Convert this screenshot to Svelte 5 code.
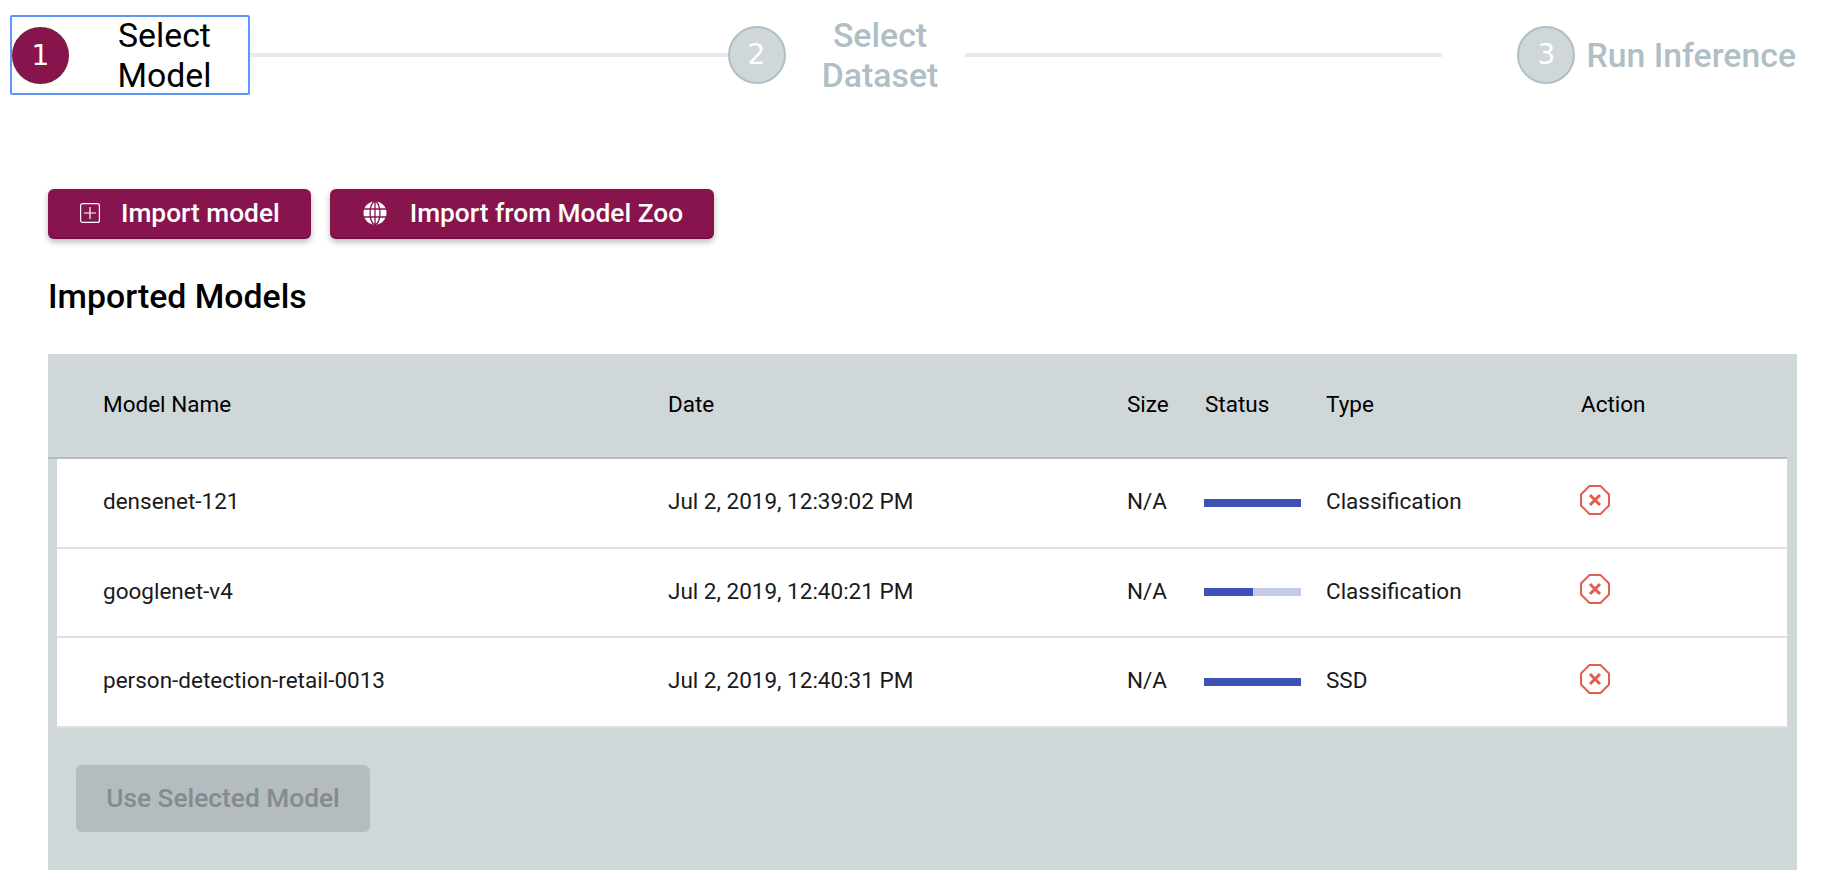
<script>
  const steps = [
    { num: 1, label: 'Select Model', active: true },
    { num: 2, label: 'Select Dataset', active: false },
    { num: 3, label: 'Run Inference', active: false, last: true }
  ];

  const models = [
    { name: 'densenet-121', date: 'Jul 2, 2019, 12:39:02 PM', size: 'N/A', progress: 100, type: 'Classification' },
    { name: 'googlenet-v4', date: 'Jul 2, 2019, 12:40:21 PM', size: 'N/A', progress: 50, type: 'Classification' },
    { name: 'person-detection-retail-0013', date: 'Jul 2, 2019, 12:40:31 PM', size: 'N/A', progress: 100, type: 'SSD' }
  ];
</script>

<div class="page">
  <div class="stepper">
    {#each steps as step, i}
      <div class="step" class:active={step.active} class:last={step.last}>
        <span class="circle">{step.num}</span>
        <span class="label">{step.label}</span>
      </div>
      {#if i < steps.length - 1}
        <div class="line"></div>
      {/if}
    {/each}
  </div>

  <div class="content">
    <div class="actions">
      <button class="btn">
        <svg width="20" height="20" viewBox="0 0 20 20" fill="none" stroke="#fff" stroke-width="1.2">
          <rect x="0.6" y="0.6" width="18.8" height="18.8" rx="2" />
          <path d="M10 4v12M4 10h12" />
        </svg>
        Import model
      </button>
      <button class="btn globe">
        <svg width="24" height="24" viewBox="0 0 24 24" fill="none">
          <circle cx="12" cy="12" r="11.5" fill="#fff" />
          <g stroke="#88144e" stroke-width="1.3">
            <ellipse cx="12" cy="12" rx="5" ry="11.5" />
            <path d="M12 0v24M1 8h22M1 16h22" />
          </g>
        </svg>
        Import from Model Zoo
      </button>
    </div>

    <h2>Imported Models</h2>

    <div class="panel">
      <div class="row head">
        <div>Model Name</div>
        <div>Date</div>
        <div>Size</div>
        <div>Status</div>
        <div>Type</div>
        <div>Action</div>
      </div>
      <div class="rows">
        {#each models as model}
          <div class="row item">
            <div>{model.name}</div>
            <div>{model.date}</div>
            <div>{model.size}</div>
            <div class="bar"><div class="fill" style="width: {model.progress}%"></div></div>
            <div>{model.type}</div>
            <div class="act">
              <svg width="30" height="30" viewBox="0 0 30 30" fill="none" stroke="#e35d4f">
                <path stroke-width="2" d="M9.5 1h11L29 9.5v11L20.5 29h-11L1 20.5v-11z" />
                <path stroke-width="3" d="M10 10l10 10M20 10l-10 10" />
              </svg>
            </div>
          </div>
        {/each}
      </div>
      <button class="use" disabled>Use Selected Model</button>
    </div>
  </div>
</div>

<style>
  :global(body) {
    background: #fff;
    font-family: Roboto, sans-serif;
  }

  .page {
    width: 1831px;
    height: 882px;
    overflow: hidden;
  }

  .stepper {
    display: flex;
    align-items: center;
    height: 80px;
    margin: 15px 34px 0 10px;
  }

  .step {
    display: flex;
    align-items: center;
    flex: 0 0 237px;
    box-sizing: border-box;
    height: 80px;
    color: #b0bec5;
    font-size: 33.8px;
    font-weight: 500;
    line-height: 40px;
  }

  .step.active {
    flex-basis: 240px;
    padding-left: 2px;
    color: #000;
    font-weight: 400;
    outline: 2px solid #5e97f6;
    outline-offset: -2px;
    border-radius: 2px;
  }

  .step.last {
    flex: 0 0 356px;
    justify-content: flex-end;
    padding-right: 2px;
    white-space: nowrap;
  }

  .circle {
    flex: none;
    box-sizing: border-box;
    width: 58px;
    height: 58px;
    border: 2px solid #b0bec5;
    border-radius: 50%;
    background: #cfd7d9;
    color: #fff;
    font-family: "DejaVu Sans", sans-serif;
    font-size: 28px;
    font-weight: 400;
    line-height: 54px;
    text-align: center;
  }

  .active .circle {
    width: 57px;
    height: 57px;
    background: #88144e;
    border-color: #7d1a4e;
  }

  .label {
    flex: 1;
    padding-left: 10px;
    padding-top: 2px;
    text-align: center;
  }

  .last .label {
    flex: none;
    padding-left: 11px;
  }

  .line {
    flex: 0 0 477.5px;
    height: 4px;
    background: #e9e9e9;
  }

  .content {
    padding: 94px 34px 0 48px;
  }

  .actions {
    display: flex;
    gap: 19px;
  }

  .btn {
    display: flex;
    align-items: center;
    gap: 21px;
    height: 50px;
    padding: 0 31px 0 32px;
    border: none;
    border-bottom: 2px solid #6e1040;
    border-radius: 6px;
    background: #88144e;
    color: #fff;
    font-family: Roboto, sans-serif;
    font-size: 26.3px;
    font-weight: 500;
    box-shadow: 0 3px 6px rgba(0, 0, 0, 0.28);
  }

  .btn.globe {
    gap: 23px;
    padding: 0 31px 0 33px;
  }

  h2 {
    margin: 40px 0 0;
    color: #000;
    font-size: 33.8px;
    font-weight: 500;
    line-height: 36px;
  }

  .panel {
    margin-top: 39px;
    padding-bottom: 38px;
    background: #cfd7d9;
  }

  .row {
    display: grid;
    grid-template-columns: 565px 459px 78px 121px 255px 1fr;
    align-items: center;
    padding-left: 46px;
    color: #1a1a1a;
    font-size: 22.5px;
  }

  .head {
    box-sizing: border-box;
    height: 105px;
    margin-right: 10px;
    border-bottom: 2px solid #b5bdc1;
    padding-bottom: 4px;
    padding-left: 55px;
    color: #000;
  }

  .rows {
    margin: 0 10px 0 9px;
    background: #fff;
  }

  .item {
    box-sizing: border-box;
    height: 89.6px;
    border-bottom: 2px solid #e0e0e0;
    padding-bottom: 3px;
  }

  .bar {
    width: 97px;
    height: 8px;
    margin: 3px 0 0 -1px;
    background: #c5cae9;
  }

  .fill {
    height: 100%;
    background: #3f51b5;
  }

  .act {
    display: flex;
    margin: 0 0 3px -1px;
  }

  .use {
    display: block;
    width: 294px;
    height: 67px;
    margin: 37px 0 0 28px;
    padding-bottom: 2px;
    border: none;
    border-radius: 6px;
    background: #b4bcbf;
    color: #848b8e;
    font-family: Roboto, sans-serif;
    font-size: 26.3px;
    font-weight: 500;
  }
</style>
